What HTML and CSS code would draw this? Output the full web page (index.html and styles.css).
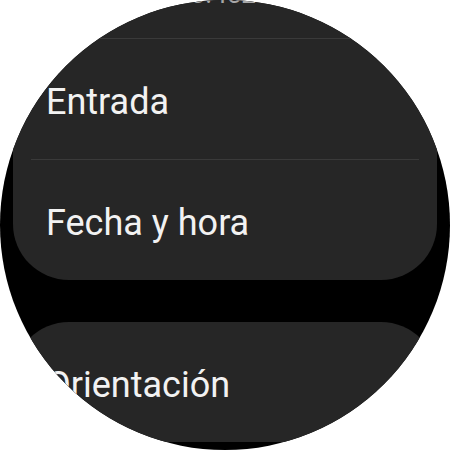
FILE: index.html
```
<!DOCTYPE html>
<html>
<head>
<meta charset="utf-8">
<link rel="stylesheet" href="styles.css">
</head>
<body>
<div class="screen">
  <div class="list">
    <div class="card">
      <div class="row row-top">
        <span class="sub">Versión 18.20.452</span>
      </div>
      <div class="divider"></div>
      <div class="row"><span class="label">Entrada</span></div>
      <div class="divider"></div>
      <div class="row"><span class="label">Fecha y hora</span></div>
    </div>
    <div class="card">
      <div class="row"><span class="label">Orientación</span></div>
    </div>
  </div>
</div>
</body>
</html>
```

FILE: styles.css
```
html, body {
  margin: 0;
  padding: 0;
  background: #ffffff;
}
.screen {
  width: 450px;
  height: 450px;
  border-radius: 50%;
  background: #000000;
  overflow: hidden;
  font-family: Roboto, "Noto Sans", sans-serif;
}
.list {
  margin-top: -82px;
  display: flex;
  flex-direction: column;
  gap: 42px;
}
.card {
  margin: 0 13px;
  background: #262626;
  border-radius: 56px;
  display: flex;
  flex-direction: column;
}
.row {
  height: 120px;
  box-sizing: border-box;
  display: flex;
  align-items: center;
  padding-left: 33px;
  padding-top: 5px;
}
.row-top {
  align-items: flex-end;
  padding-top: 0;
  padding-bottom: 29px;
}
.label {
  color: #f2f2f2;
  font-size: 36px;
  line-height: 40px;
}
.sub {
  color: #a8a8a8;
  font-size: 26px;
  line-height: 30px;
}
.divider {
  height: 1px;
  margin: 0 18px;
  background: #3a3a3a;
}
```
